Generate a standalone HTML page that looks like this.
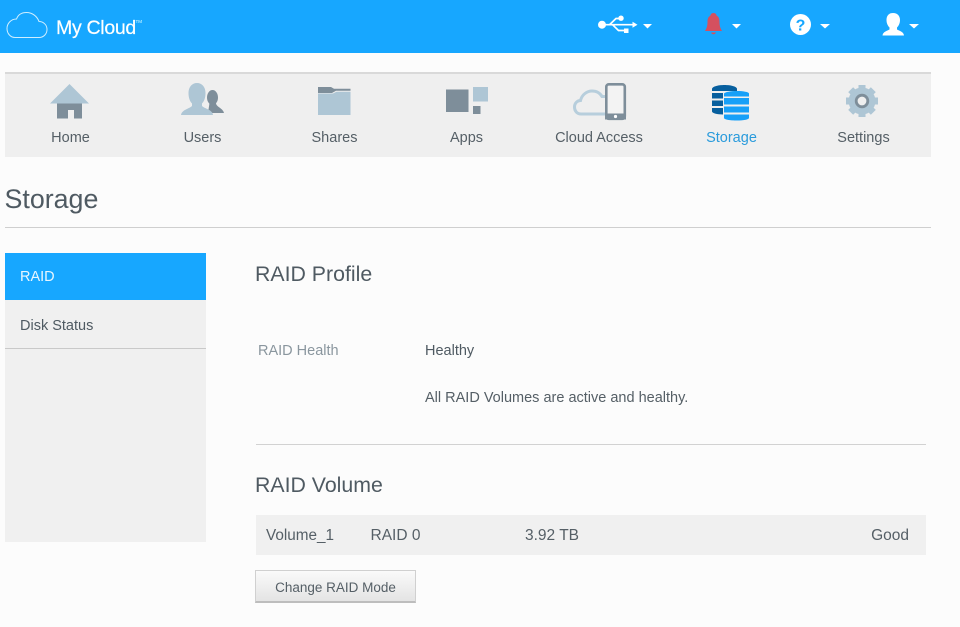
<!DOCTYPE html>
<html><head><meta charset="utf-8"><title>My Cloud - Storage</title>
<style>
html,body{margin:0;padding:0}
body{width:960px;height:627px;overflow:hidden;position:relative;background:#fcfcfc;font-family:"Liberation Sans",Arial,sans-serif;color:#4f5a62}
.a{position:absolute;white-space:nowrap}
.nl{position:absolute;top:129px;width:132px;text-align:center;font-size:14.500px;line-height:18px;color:#555f66}
svg{position:absolute;left:0;top:0}
</style></head>
<body>
<div class="a" style="left:0;top:0;width:960px;height:53px;background:#17a7ff"></div>
<div class="a" style="left:4.500px;top:72px;width:926.500px;height:85px;background:#efefef;border-top:2px solid #d9d9d9;box-sizing:border-box"></div>
<div class="a" style="left:56px;top:17px;font-size:19.500px;line-height:22px;color:#fff;font-weight:400;letter-spacing:-.3px;-webkit-text-stroke:.2px #fff">My Cloud</div>
<div class="a" style="left:135.500px;top:19px;font-size:4.500px;line-height:6px;color:#dff">TM</div>

<svg width="960" height="627" viewBox="0 0 960 627">
<!-- logo cloud -->
<path d="M15 37.500H39C44 37.500 47 33.500 47 29.500C47 25 43.500 21.500 39 21.500C37 16 32 12.500 26.500 12.500C21.500 12.500 18 15 16.500 19C11 19 7 23.500 7 28.500C7 33.500 10.500 37.500 15 37.500Z" fill="none" stroke="#cfeeff" stroke-width="1"/>
<!-- usb -->
<circle cx="602" cy="24.700" r="4" fill="#fff"/>
<path d="M602 24.700H634M609.500 24.700L616 18.500H621M612.500 24.700L618.500 30.500H625" fill="none" stroke="#fff" stroke-width="1.700"/>
<circle cx="621" cy="18.200" r="2.700" fill="#fff"/><rect x="624" y="28.500" width="4.500" height="4.500" fill="#fff"/>
<path d="M632.500 21.700L637.500 24.700L632.500 27.700Z" fill="#fff"/>
<path d="M643 24H652L647.500 28.500Z" fill="#fff"/>
<!-- bell -->
<path d="M713.500 13C711.500 13 710.500 14.500 710.500 15.500C708 17 707.500 19 707.500 22C707.500 26 706.500 28.500 705 31H722C720.500 28.500 719.500 26 719.500 22C719.500 19 719 17 716.500 15.500C716.500 14.500 715.500 13 713.500 13ZM711 32.500C711.500 33.800 712.500 34.300 713.500 34.300C714.500 34.300 715.500 33.800 716 32.500Z" fill="#d4505f"/>
<path d="M732 24H741L736.500 28.500Z" fill="#fff"/>
<!-- help -->
<circle cx="800.500" cy="24.500" r="10.500" fill="#fff"/>
<text x="800.500" y="30.500" text-anchor="middle" font-family="Liberation Sans" font-size="16" font-weight="700" fill="#17a7ff">?</text>
<path d="M820 24H830L825 28.500Z" fill="#fff"/>
<!-- user -->
<path d="M893 13C888.500 13 886.500 16 886.500 20C886.500 23.500 888 26 889.500 27.500V29.500C887 31 883 31.500 882.500 35.500H904C903.500 31.500 899.500 31 897 29.500V27.500C898.500 26 900 23.500 900 20C900 16 897.500 13 893 13Z" fill="#fff"/>
<path d="M909 24H919L914 28.500Z" fill="#fff"/>

<!-- home -->
<path d="M69.500 84L89 103.500H50Z" fill="#aec6d5"/>
<path d="M57 103.500H82V118.500H74V110H68V118.500H57Z" fill="#7e8e9a"/>
<!-- users -->
<ellipse cx="212.500" cy="97.500" rx="5.500" ry="7.500" fill="#7e8e9a"/>
<path d="M209.500 103H216C216 107 223 108 224 113H208Z" fill="#7e8e9a"/>
<path d="M197 83C192 83 188.500 87 188.500 93C188.500 98 190 101.500 192 103.500V106C189 109 182 109.500 181 115H213C212.500 109.500 205 109 202 106V103.500C204 101.500 205.500 98 205.500 93C205.500 87 202 83 197 83Z" fill="#aec6d5"/>
<!-- shares -->
<path d="M318 87H331L334 88.700H350.500V90.700H336L332 93H318Z" fill="#7e8e9a"/>
<path d="M318 93.500H333L336.500 91.700H350.500V115H318Z" fill="#aec6d5"/>
<!-- apps -->
<rect x="446" y="89.500" width="22.500" height="22.500" fill="#7e8e9a"/>
<rect x="473" y="87" width="15" height="14.500" fill="#aec6d5"/>
<rect x="473" y="106" width="7.500" height="8" fill="#7e8e9a"/>
<!-- cloud access -->
<path d="M606 114H581C577 114 574.500 111 574.500 107C574.500 103 577.500 100.500 580.500 100.500C582 94.500 587 91 592 91C596.500 91 600 93 602 96.500H606" fill="none" stroke="#b7cedc" stroke-width="3"/>
<rect x="606.300" y="84.300" width="18.500" height="34.500" rx="2.500" fill="#f3f3f3" stroke="#7e8e9a" stroke-width="2.600"/>
<rect x="605" y="113.500" width="21" height="6" fill="#7e8e9a"/>
<circle cx="615.500" cy="116.500" r="1.600" fill="#fff"/>
<!-- storage -->
<path d="M712 89C712 86.500 718 85 724.500 85C731 85 737 86.500 737 89V91H712Z" fill="#075f9e"/>
<rect x="712" y="93" width="11" height="5.500" fill="#075f9e"/>
<rect x="712" y="100.500" width="11" height="5.500" fill="#075f9e"/>
<path d="M712 108H723V114.500C717 114.500 712 113 712 111.500Z" fill="#075f9e"/>
<path d="M724 93.500C725 92 731 91 737 91C743 91 749 92 749 93.500V96.500H724Z" fill="#17a0f8"/>
<rect x="724" y="98" width="25" height="6.500" fill="#17a0f8"/>
<rect x="724" y="106.500" width="25" height="6" fill="#17a0f8"/>
<path d="M724 114.500H749V118C749 119.500 743 120.500 737 120.500C730 120.500 724 119.500 724 118Z" fill="#17a0f8"/>
<!-- gear -->
<circle cx="862" cy="101" r="13.500" fill="#aec6d5"/>
<g fill="#aec6d5"><rect x="858.500" y="85" width="7" height="32"/><rect x="858.500" y="85" width="7" height="32" transform="rotate(45 862 101)"/><rect x="858.500" y="85" width="7" height="32" transform="rotate(90 862 101)"/><rect x="858.500" y="85" width="7" height="32" transform="rotate(135 862 101)"/></g>
<circle cx="862" cy="101" r="5.800" fill="#efefef" stroke="#7e8e9a" stroke-width="2.800"/>
</svg>

<div class="nl" style="left:4.500px">Home</div>
<div class="nl" style="left:136.500px">Users</div>
<div class="nl" style="left:268.500px">Shares</div>
<div class="nl" style="left:400.500px">Apps</div>
<div class="nl" style="left:533px">Cloud Access</div>
<div class="nl" style="left:665.500px;color:#2a9bdc">Storage</div>
<div class="nl" style="left:797.500px">Settings</div>

<div class="a" style="left:4.500px;top:183px;font-size:26.800px;line-height:32px;color:#4f5a62">Storage</div>
<div class="a" style="left:4.500px;top:227px;width:926.500px;height:1px;background:#cfcfcf"></div>

<div class="a" style="left:5px;top:253px;width:200.500px;height:289px;background:#f0f0f0"></div>
<div class="a" style="left:5px;top:253px;width:200.500px;height:47px;background:#17a7ff"></div>
<div class="a" style="left:20px;top:269px;font-size:14.500px;line-height:17px;color:#e8f6ff">RAID</div>
<div class="a" style="left:20px;top:318px;font-size:14.500px;line-height:17px;color:#4f5a62">Disk Status</div>
<div class="a" style="left:5px;top:348px;width:200.500px;height:1px;background:#c9c9c9"></div>

<div class="a" style="left:255px;top:262px;font-size:21.300px;line-height:24px;color:#4f5a62">RAID Profile</div>
<div class="a" style="left:258px;top:343px;font-size:14.500px;line-height:17px;color:#8a969e">RAID Health</div>
<div class="a" style="left:425px;top:343px;font-size:14.500px;line-height:17px;color:#4f5a62">Healthy</div>
<div class="a" style="left:425px;top:390px;font-size:14.500px;line-height:17px;color:#555f66">All RAID Volumes are active and healthy.</div>
<div class="a" style="left:255.500px;top:443.500px;width:670.500px;height:1px;background:#d2d2d2"></div>
<div class="a" style="left:255px;top:473px;font-size:21.300px;line-height:24px;color:#4f5a62">RAID Volume</div>

<div class="a" style="left:256px;top:515px;width:670px;height:40px;background:#f0f0f0"></div>
<div class="a" style="left:266px;top:527px;font-size:15.300px;line-height:18px;color:#555f66">Volume_1</div>
<div class="a" style="left:370.500px;top:527px;font-size:15.500px;line-height:18px;color:#555f66">RAID 0</div>
<div class="a" style="left:525px;top:527px;font-size:15.500px;line-height:18px;color:#555f66">3.92 TB</div>
<div class="a" style="right:51px;top:527px;font-size:15.500px;line-height:18px;color:#555f66">Good</div>

<div class="a" style="left:255px;top:570px;width:161px;height:33px;box-sizing:border-box;background:linear-gradient(#fafafa,#e4e4e4);border:1px solid #d0d0d0;border-bottom:2px solid #bdbdbd;text-align:center;font-size:13.500px;line-height:31px;padding-top:1px;color:#555f66">Change RAID Mode</div>
</body></html>
